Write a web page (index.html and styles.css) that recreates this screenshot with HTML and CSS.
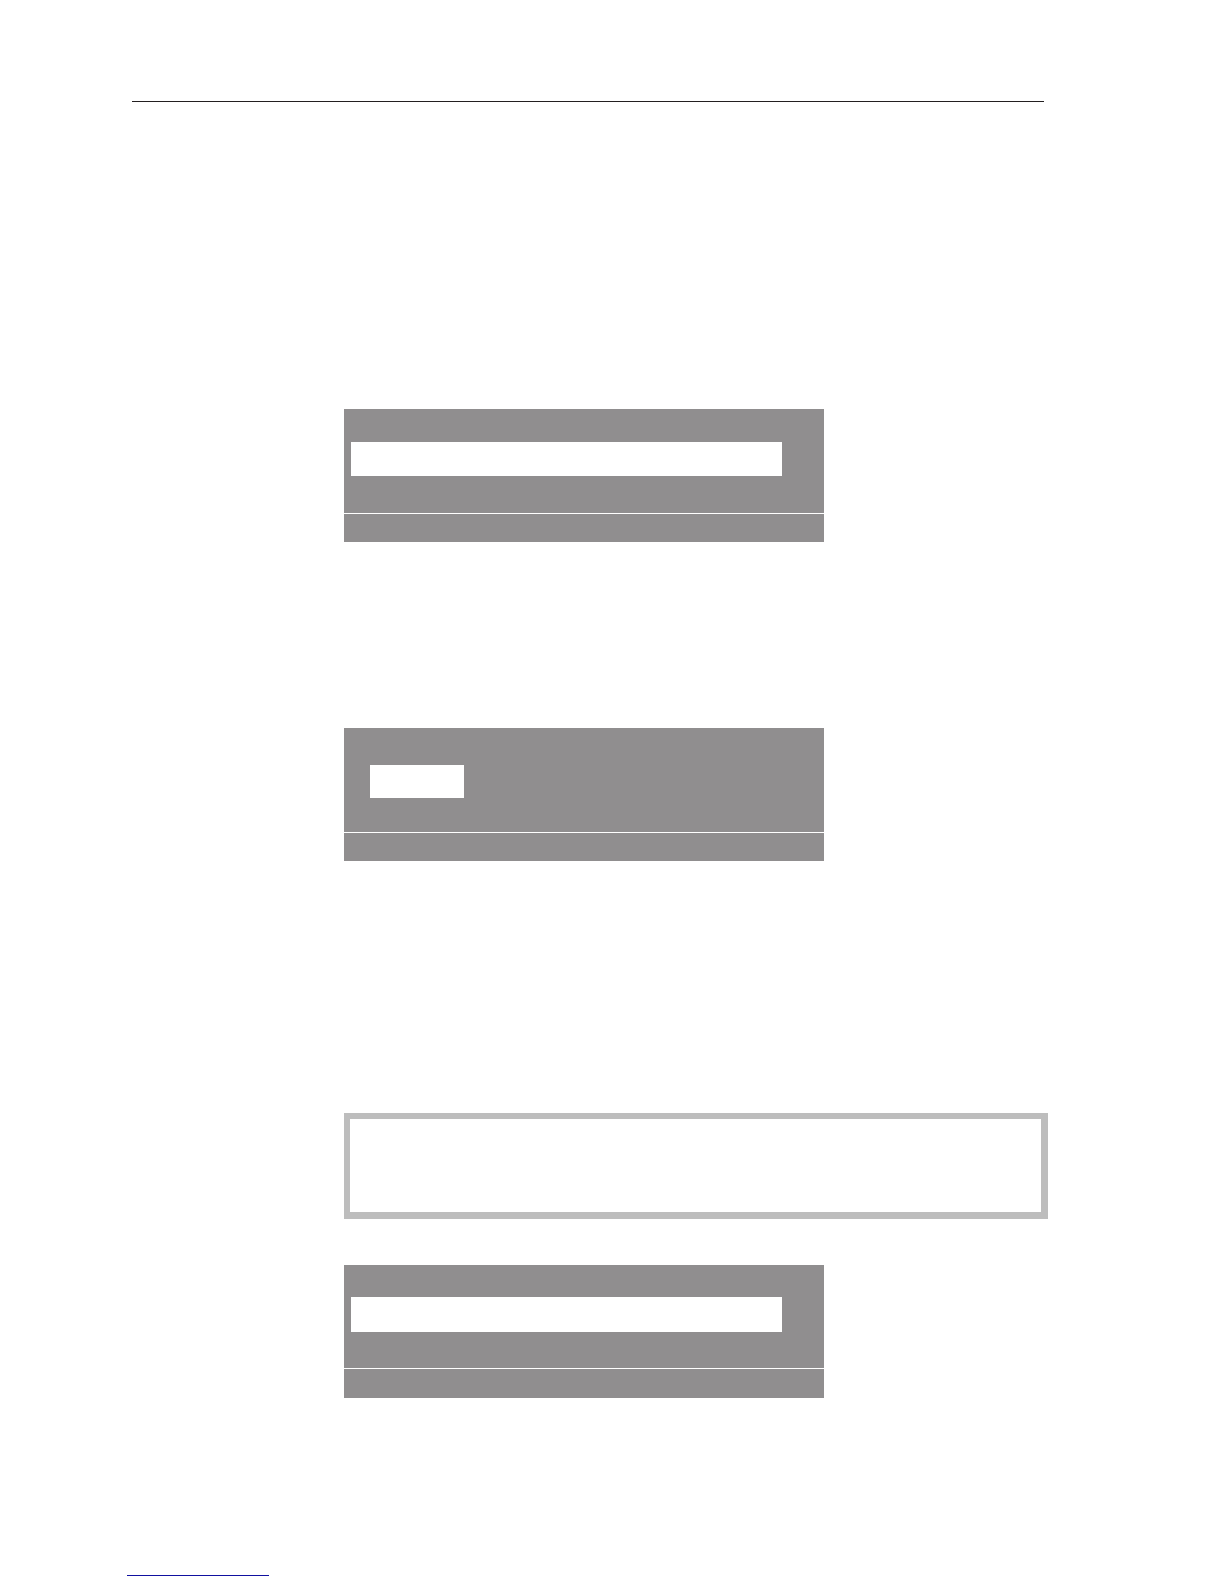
FILE: index.html
```
<!doctype html>
<html lang="en">
<head>
    <meta charset="UTF-8">
    <meta name="viewport" content="width=device-width, initial-scale=1.0">
    <title>Manual page</title>
    <link rel="stylesheet" href="styles.css">
</head>
<body>
    <div class="page">
        <header class="page-header"></header>
        <main class="content">
            <div class="display">
                <div class="screen">
                    <div class="selected"></div>
                </div>
                <div class="status"></div>
            </div>
            <div class="display display-option">
                <div class="screen">
                    <div class="selected"></div>
                </div>
                <div class="status"></div>
            </div>
            <div class="note"></div>
            <div class="display display-last">
                <div class="screen">
                    <div class="selected"></div>
                </div>
                <div class="status"></div>
            </div>
        </main>
        <footer class="page-footer">
            <a class="page-link" href="#"></a>
        </footer>
    </div>
</body>
</html>
```

FILE: styles.css
```
*{
    margin:0;
    padding:0;
    box-sizing: border-box;
}
body{
    background-color: #fff;
    font-family: "Liberation Sans", Arial, sans-serif;
}
.page{
    display:flex;
    flex-direction: column;
    min-height:100vh;
}
.page-header{
    margin:101px 180px 0 132px;
    border-top:1px solid #231f20;
}
.content{
    display:flex;
    flex-direction: column;
    padding:307px 176px 0 344px;
}
/* grey display with a selected line and a status bar */
.display{
    width:100%;
    max-width:480px;
}
.screen{
    padding:33px 42px 37px 7px;
    background-color: #908e8f;
}
.selected{
    height:34px;
    background-color: #fff;
}
.status{
    height:29px;
    border-top:1px solid #fff;
    background-color: #908e8f;
}
.display-option{
    margin-top:186px;
}
.display-option .screen{
    padding:37px 26px 34px;
}
.display-option .selected{
    width:94px;
    height:33px;
}
.note{
    margin-top:252px;
    min-height:106px;
    border:6px solid #bdbdbd;
    border-right-width:7px;
    border-bottom-width:7px;
}
.display-last{
    margin-top:46px;
}
.display-last .screen{
    padding:32px 42px 36px 7px;
}
.display-last .selected{
    height:35px;
}
.display-last .status{
    height:30px;
}
.page-footer{
    margin-top:auto;
    padding:0 127px 8px;
}
.page-link{
    display:block;
    width:142px;
    border-bottom:1px solid #1111a0;
}
```
